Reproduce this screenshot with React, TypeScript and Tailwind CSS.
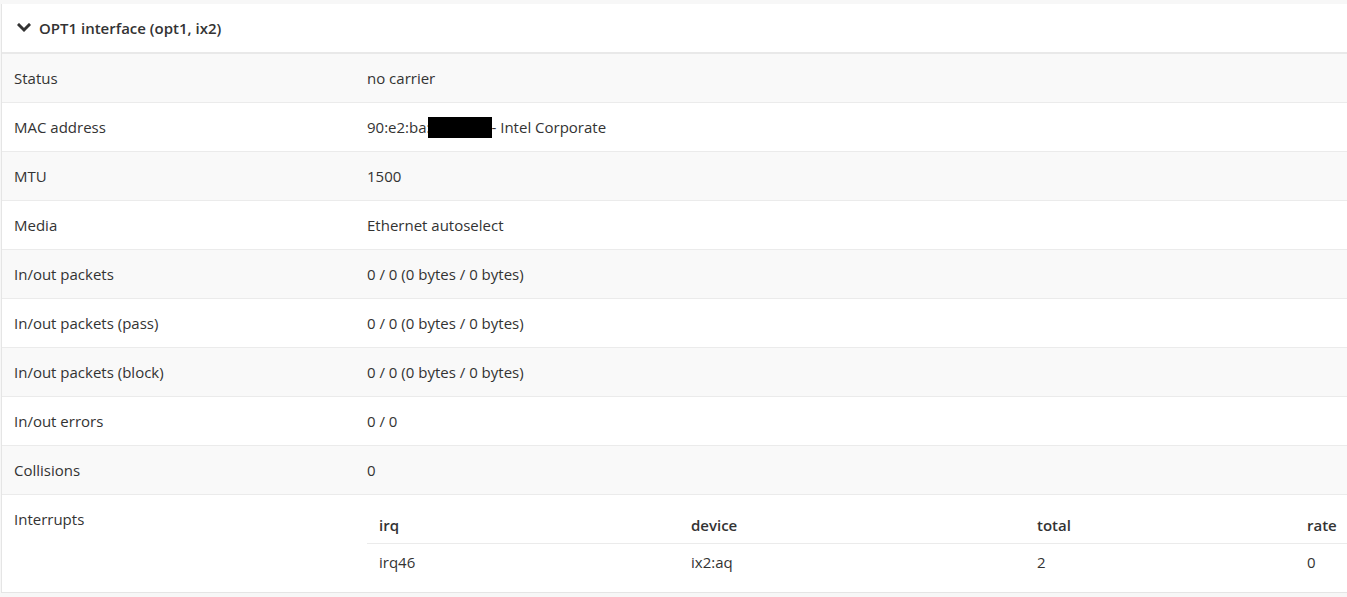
const rows: [string, React.ReactNode][] = [
  ["Status", "no carrier"],
  [
    "MAC address",
    <>
      90:e2:ba:
      <span className="inline-block w-[64px] h-[21px] bg-black align-middle -ml-[3px] -my-[3px] relative -top-[1px]" />
      - Intel Corporate
    </>,
  ],
  ["MTU", "1500"],
  ["Media", "Ethernet autoselect"],
  ["In/out packets", "0 / 0 (0 bytes / 0 bytes)"],
  ["In/out packets (pass)", "0 / 0 (0 bytes / 0 bytes)"],
  ["In/out packets (block)", "0 / 0 (0 bytes / 0 bytes)"],
  ["In/out errors", "0 / 0"],
  ["Collisions", "0"],
];

function Chevron() {
  return (
    <svg width="14" height="10" viewBox="0 0 14 10" className="shrink-0">
      <polyline
        points="2,2 7,7 12,2"
        fill="none"
        stroke="#333"
        strokeWidth="3"
        strokeLinecap="square"
      />
    </svg>
  );
}

export default function App() {
  return (
    <div
      className="min-h-[597px] bg-[#f7f7f7] pt-[4px] text-[15px] text-[#333]"
      style={{ fontFamily: "'Open Sans', Lato, sans-serif" }}
    >
      <div className="ml-[1px] bg-white border-l border-[#e5e5e5] border-b">
        <div className="h-[50px] flex items-center gap-[8px] pl-[15px] border-b-2 border-[#e9e9e9]">
          <Chevron />
          <span className="text-[15px] font-semibold">OPT1 interface (opt1, ix2)</span>
        </div>
        <table className="w-full table-fixed border-collapse">
          <tbody>
            {rows.map(([label, value], i) => (
              <tr
                key={label}
                className={`border-b border-[#ebebeb] ${i % 2 === 0 ? "bg-[#f9f9f9]" : "bg-white"}`}
              >
                <td className="w-[353px] px-[12px] py-[14px] leading-5 align-top">{label}</td>
                <td className="px-[12px] py-[14px] leading-5 align-top whitespace-nowrap">{value}</td>
              </tr>
            ))}
            <tr className="bg-white">
              <td className="w-[353px] px-[12px] pt-[14px] pb-[12px] leading-5 align-top">Interrupts</td>
              <td className="pl-[12px] pt-[14px] pb-[12px] align-top">
                <table className="w-[980px] table-fixed border-collapse">
                  <thead>
                    <tr className="border-b border-[#ebebeb]">
                      <th className="w-[312px] text-left font-semibold px-[12px] pt-[6px] pb-[8px] leading-5">irq</th>
                      <th className="w-[346px] text-left font-semibold px-[12px] pt-[6px] pb-[8px] leading-5">device</th>
                      <th className="w-[270px] text-left font-semibold px-[12px] pt-[6px] pb-[8px] leading-5">total</th>
                      <th className="text-left font-semibold px-[12px] pt-[6px] pb-[8px] leading-5">rate</th>
                    </tr>
                  </thead>
                  <tbody>
                    <tr>
                      <td className="px-[12px] py-[8px] leading-5">irq46</td>
                      <td className="px-[12px] py-[8px] leading-5">ix2:aq</td>
                      <td className="px-[12px] py-[8px] leading-5">2</td>
                      <td className="px-[12px] py-[8px] leading-5">0</td>
                    </tr>
                  </tbody>
                </table>
              </td>
            </tr>
          </tbody>
        </table>
      </div>
    </div>
  );
}
